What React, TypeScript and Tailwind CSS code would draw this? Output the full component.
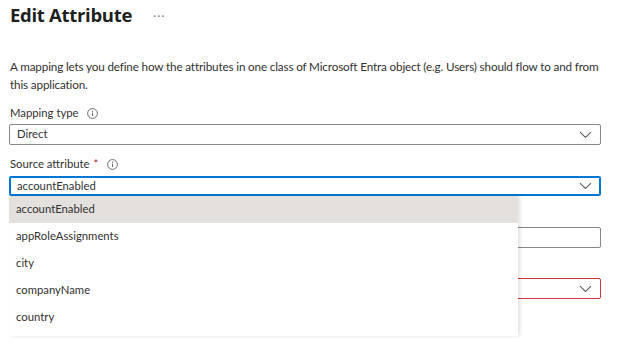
import React from "react";

const font = { fontFamily: 'Lato, "Open Sans", sans-serif' };
const titleFont = { fontFamily: '"Open Sans", Lato, sans-serif' };

const Chevron = () => (
    <svg width="13" height="8" viewBox="0 0 13 8" className="shrink-0">
        <path d="M1 1.2 L6.5 6.5 L12 1.2" fill="none" stroke="#605e5c" strokeWidth="1.1"/>
    </svg>
);

const Info = () => (
    <svg width="11" height="11" viewBox="0 0 11 11" className="shrink-0">
        <circle cx="5.5" cy="5.5" r="4.9" fill="none" stroke="#605e5c" strokeWidth="0.9"/>
        <line x1="5.5" y1="4.6" x2="5.5" y2="8" stroke="#605e5c" strokeWidth="0.9"/>
        <circle cx="5.5" cy="3.2" r="0.6" fill="#605e5c"/>
    </svg>
);

const options = ["accountEnabled", "appRoleAssignments", "city", "companyName", "country"];

export default function App() {
    return (
        <div className="w-[618px] h-[355px] bg-white overflow-hidden text-[#323130] text-[12px]" style={font}>
            <div className="pl-[9px] pr-[17px]">
                {/* Header */}
                <div className="h-[30px] flex items-center pl-px">
                    <h1 className="text-[18.5px] font-bold text-[#201f1e] tracking-[-0.3px]" style={titleFont}>Edit Attribute</h1>
                    <span className="ml-[21px] mt-[2px] text-[#8a8886] text-[12px] tracking-[1px]">···</span>
                </div>

                <p className="mt-[28px] pl-px -mr-[10px] leading-[17.5px] text-[11.7px] tracking-[-0.15px]">
                    A mapping lets you define how the attributes in one class of Microsoft Entra object (e.g. Users) should flow to and from this application.
                </p>

                {/* Mapping type */}
                <div className="mt-[12px] h-[17px] flex items-center gap-[8px] pl-px text-[11.3px]">
                    <span>Mapping type</span>
                    <Info/>
                </div>
                <div className="mt-[2px] h-[21px] border border-[#8a8886] rounded-[2px] flex items-center justify-between pl-[7px] pr-[8px] text-[11.3px]">
                    <span>Direct</span>
                    <Chevron/>
                </div>

                {/* Source attribute */}
                <div className="mt-[11px] h-[17px] flex items-center pl-px text-[11.3px]">
                    <span>Source attribute</span>
                    <span className="text-[#a4262c] ml-[4px]">*</span>
                    <span className="ml-[9px] flex"><Info/></span>
                </div>
                <div className="relative mt-[3px] text-[11.3px]">
                    <div className="h-[20px] border-2 border-[#0078d4] rounded-[2px] flex items-center justify-between pl-[6px] pr-[7px]">
                        <span>accountEnabled</span>
                        <Chevron/>
                    </div>

                    {/* Options list */}
                    <ul className="absolute left-0 top-[20px] w-[509px] bg-white z-10 shadow-[2px_0_4px_rgba(0,0,0,0.12)] pb-[5px]">
                        {options.map((o, i) => (
                            <li key={o}
                                className={`h-[27px] flex items-center pl-[7px] ${i === 0 ? "bg-[#e3e0dd] h-[26px]" : ""}`}>
                                {o}
                            </li>
                        ))}
                    </ul>

                    {/* Fields hidden behind the list (labels covered) */}
                    <div className="mt-[11px] h-[17px]"/>
                    <div className="mt-[3px] h-[21px] border border-[#8a8886] rounded-[2px]"/>

                    <div className="mt-[10px] h-[17px]"/>
                    <div className="mt-[3px] h-[21px] border border-[#d13438] rounded-[2px] flex items-center justify-end pr-[8px]">
                        <Chevron/>
                    </div>
                </div>
            </div>
        </div>
    );
}
